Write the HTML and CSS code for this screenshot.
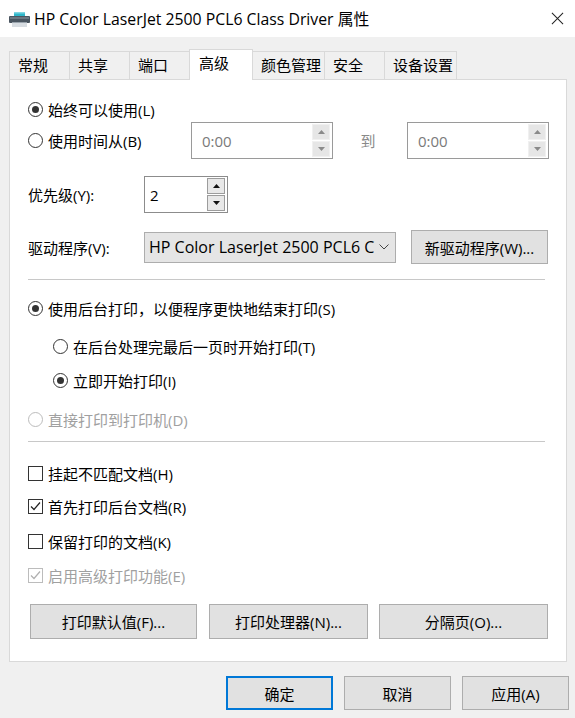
FILE: index.html
```html
<!DOCTYPE html>
<html lang="zh-CN">
<head>
<meta charset="utf-8">
<title>HP Color LaserJet 2500 PCL6 Class Driver 属性</title>
<link rel="stylesheet" href="styles.css">
</head>
<body>
<div class="titlebar">
  <svg class="app-icon" viewBox="0 0 21 15" aria-hidden="true">
    <rect x="5" y="0" width="11" height="4" fill="#2fb5c8"/>
    <rect x="5" y="0" width="11" height="1.5" fill="#7fd6e2"/>
    <rect x="0" y="4" width="21" height="7" rx="1" fill="#4a5560"/>
    <rect x="1" y="5" width="19" height="2" fill="#6b7781"/>
    <rect x="3" y="10" width="15" height="5" fill="#d8dde2"/>
    <rect x="3" y="10" width="15" height="1" fill="#9aa4ad"/>
  </svg>
  <span class="title">HP Color LaserJet 2500 PCL6 Class Driver 属性</span>
  <svg class="close" viewBox="0 0 14 14" aria-hidden="true">
    <path d="M1 1 L13 13 M13 1 L1 13" stroke="#222" stroke-width="1.1" fill="none"/>
  </svg>
</div>

<div class="tabs">
  <div class="tab">常规</div>
  <div class="tab">共享</div>
  <div class="tab">端口</div>
  <div class="tab active">高级</div>
  <div class="tab">颜色管理</div>
  <div class="tab">安全</div>
  <div class="tab">设备设置</div>
</div>

<div class="panel">
  <div class="row r1">
    <span class="radio on"></span><span>始终可以使用(L)</span>
  </div>

  <div class="row r2">
    <div class="lead">
      <span class="radio"></span><span>使用时间从(B)</span>
    </div>
    <div class="spin time">
      <span class="val">0:00</span>
      <div class="spin-btns">
        <span class="sbtn"><svg viewBox="0 0 7 4"><path d="M0 4 L3.5 0 L7 4 Z" fill="#8a8a8a"/></svg></span>
        <span class="sbtn"><svg viewBox="0 0 7 4"><path d="M0 0 L3.5 4 L7 0 Z" fill="#8a8a8a"/></svg></span>
      </div>
    </div>
    <span class="to">到</span>
    <div class="spin time">
      <span class="val">0:00</span>
      <div class="spin-btns">
        <span class="sbtn"><svg viewBox="0 0 7 4"><path d="M0 4 L3.5 0 L7 4 Z" fill="#8a8a8a"/></svg></span>
        <span class="sbtn"><svg viewBox="0 0 7 4"><path d="M0 0 L3.5 4 L7 0 Z" fill="#8a8a8a"/></svg></span>
      </div>
    </div>
  </div>

  <div class="row r3">
    <span class="label">优先级(Y):</span>
    <div class="spin prio">
      <span class="val">2</span>
      <div class="spin-btns">
        <span class="sbtn framed"><svg viewBox="0 0 7 4"><path d="M0 4 L3.5 0 L7 4 Z" fill="#111"/></svg></span>
        <span class="sbtn framed"><svg viewBox="0 0 7 4"><path d="M0 0 L3.5 4 L7 0 Z" fill="#111"/></svg></span>
      </div>
    </div>
  </div>

  <div class="row r4">
    <span class="label">驱动程序(V):</span>
    <div class="combo">
      <span class="combo-text">HP Color LaserJet 2500 PCL6 C</span>
      <svg class="chev" viewBox="0 0 10 6"><path d="M0.5 0.5 L5 5 L9.5 0.5" stroke="#444" stroke-width="1" fill="none"/></svg>
    </div>
    <span class="btn newdrv">新驱动程序(W)...</span>
  </div>

  <div class="sep s1"></div>

  <div class="row r5">
    <span class="radio on"></span><span>使用后台打印，以便程序更快地结束打印(S)</span>
  </div>
  <div class="row r6 sub">
    <span class="radio"></span><span>在后台处理完最后一页时开始打印(T)</span>
  </div>
  <div class="row r7 sub">
    <span class="radio on"></span><span>立即开始打印(I)</span>
  </div>
  <div class="row r8 disabled">
    <span class="radio"></span><span>直接打印到打印机(D)</span>
  </div>

  <div class="sep s2"></div>

  <div class="row c1">
    <span class="check"></span><span>挂起不匹配文档(H)</span>
  </div>
  <div class="row c2">
    <span class="check"><svg viewBox="0 0 13 13"><path d="M2 6.5 L5 9.5 L11 2.5" stroke="#222" stroke-width="1.2" fill="none"/></svg></span><span>首先打印后台文档(R)</span>
  </div>
  <div class="row c3">
    <span class="check"></span><span>保留打印的文档(K)</span>
  </div>
  <div class="row c4 disabled">
    <span class="check"><svg viewBox="0 0 13 13"><path d="M2 6.5 L5 9.5 L11 2.5" stroke="#b0b0b0" stroke-width="1.2" fill="none"/></svg></span><span>启用高级打印功能(E)</span>
  </div>

  <div class="btnrow">
    <span class="btn b1">打印默认值(F)...</span>
    <span class="btn b2">打印处理器(N)...</span>
    <span class="btn b3">分隔页(O)...</span>
  </div>
</div>

<div class="footer">
  <span class="btn fbtn default">确定</span>
  <span class="btn fbtn">取消</span>
  <span class="btn fbtn">应用(A)</span>
</div>
</body>
</html>
```

FILE: styles.css
```css
* { box-sizing: border-box; }
html, body { margin: 0; padding: 0; }
body {
  width: 575px;
  height: 718px;
  overflow: hidden;
  background: #f0f0f0;
  font-family: "Open Sans", "Noto Sans CJK SC", sans-serif;
  font-size: 15px;
  color: #000;
}

/* title bar */
.titlebar {
  height: 37px;
  background: #fff;
  display: flex;
  align-items: center;
  padding-left: 9px;
}
.app-icon { width: 21px; height: 15px; margin-right: 4px; margin-top: 1px; }
.title { flex: 1; font-size: 15.8px; white-space: nowrap; }
.close { width: 13px; height: 13px; margin-right: 11px; }

/* tabs */
.tabs {
  display: flex;
  align-items: flex-start;
  height: 42px;
  padding: 14px 0 0 9px;
}
.tab {
  position: relative;
  height: 28px;
  min-width: 61px;
  padding: 0 3px 2px 8px;
  margin-right: -1px;
  border: 1px solid #d9d9d9;
  border-bottom: none;
  background: #f0f0f0;
  display: flex;
  align-items: center;
  white-space: nowrap;
}
.tab.active {
  z-index: 1;
  height: 31px;
  margin-top: -2px;
  min-width: 64px;
  padding: 0 8px 5px 9px;
  background: #fff;
}

/* panel */
.panel {
  height: 583px;
  margin: 0 8px 0 9px;
  background: #fff;
  border: 1px solid #d9d9d9;
  padding: 19px 17px 0 18px;
}
.row {
  display: flex;
  align-items: center;
  height: 20px;
  white-space: nowrap;
}
.r2 { height: 37px; margin-top: 3px; }
.r3 { height: 37px; margin-top: 17px; }
.r4 { height: 34px; margin-top: 17px; }
.s1 { margin-top: 15px; }
.r5 { margin-top: 18px; }
.r6 { margin-top: 18px; }
.r7 { margin-top: 14px; }
.r8 { margin-top: 19px; }
.s2 { margin-top: 12px; }
.c1 { margin-top: 21px; }
.c2 { margin-top: 13px; }
.c3 { margin-top: 15px; }
.c4 { margin-top: 14px; }
.sub { padding-left: 25px; }

.lead { display: flex; align-items: center; width: 163px; }
.label { width: 116px; }

.radio {
  flex: none;
  width: 15px;
  height: 15px;
  border: 1px solid #333;
  border-radius: 50%;
  margin-right: 5px;
  display: flex;
  align-items: center;
  justify-content: center;
}
.radio.on::after {
  content: "";
  width: 7px;
  height: 7px;
  border-radius: 50%;
  background: #333;
}
.check {
  flex: none;
  width: 15px;
  height: 15px;
  border: 1px solid #333;
  margin-right: 5px;
  display: flex;
  align-items: center;
  justify-content: center;
}
.check svg { width: 13px; height: 13px; }

.disabled { color: #a0a0a0; }
.disabled .radio, .disabled .check { border-color: #bcbcbc; }

/* spin boxes */
.spin {
  height: 37px;
  border: 1px solid #8c8c8c;
  display: flex;
  align-items: center;
}
.spin.time { width: 142px; padding-left: 10px; color: #7a7a7a; border-color: #9a9a9a; }
.spin.prio { width: 84px; padding-left: 5px; border-color: #8c8c8c; }
.spin .val { flex: 1; }
.spin-btns {
  display: flex;
  flex-direction: column;
  gap: 1px;
  margin-right: 2px;
}
.sbtn {
  width: 18px;
  height: 16px;
  background: #e6e6e6;
  border: 1px solid #f0f0f0;
  display: flex;
  align-items: center;
  justify-content: center;
}
.sbtn.framed { background: #e8e8e8; border-color: #9c9c9c; }
.sbtn svg { width: 7px; height: 4px; }
.to { width: 74px; padding-right: 4px; text-align: center; color: #8a8a8a; }

/* combo */
.combo {
  width: 252px;
  height: 31px;
  background: #e5e5e5;
  border: 1px solid #adadad;
  display: flex;
  align-items: center;
  padding: 0 6px 0 4px;
}
.combo-text { flex: 1; overflow: hidden; white-space: nowrap; font-size: 16px; }
.chev { width: 10px; height: 6px; margin-left: 4px; flex: none; }

/* buttons */
.btn {
  display: flex;
  align-items: center;
  justify-content: center;
  background: #e1e1e1;
  border: 1px solid #adadad;
  white-space: nowrap;
}
.newdrv { width: 137px; height: 34px; margin-left: 15px; }

.sep { height: 1px; width: 517px; background: #c8c8c8; }

.btnrow {
  display: flex;
  margin-top: 19px;
  padding-left: 2px;
}
.btnrow .btn { height: 35px; }
.b1 { width: 167px; }
.b2 { width: 159px; margin-left: 12px; }
.b3 { width: 169px; margin-left: 11px; }

/* footer */
.footer {
  display: flex;
  justify-content: flex-end;
  gap: 11px;
  margin-top: 14px;
  padding-right: 6px;
}
.fbtn { width: 107px; height: 34px; }
.fbtn.default { border: 2px solid #0078d7; }
```
